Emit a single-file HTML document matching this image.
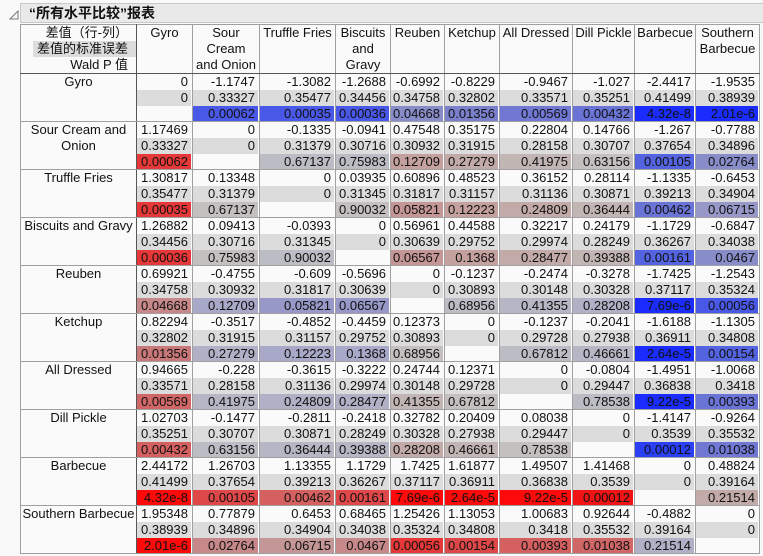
<!DOCTYPE html>
<html><head><meta charset="utf-8"><style>
body{margin:0;background:#f9f9f9;font-family:"Liberation Sans","Noto Sans CJK SC",sans-serif;font-size:13px;color:#111;width:763px;height:556px;overflow:hidden;position:relative}
.title{position:absolute;left:20px;top:3px;width:737px;height:18px;background:#e9e9e9;border:1px solid #c8c8c8;font-weight:bold;font-size:14px;line-height:18px;padding-left:8px;box-sizing:content-box}
.tri{position:absolute;left:9px;top:10px}
table{position:absolute;left:20px;top:24px;border-collapse:collapse;table-layout:fixed;width:739px;background:#fafafa}
td,th{border:1px solid #a0a0a0;padding:0;vertical-align:top;font-weight:normal;line-height:16px;overflow:hidden}
th{text-align:center;height:47px}
th.h{text-align:right;padding-right:0}
th.h div{height:16px;padding-right:8px}
td.l{text-align:center;border-right:1px solid #555}
tr.hd th{border-bottom:1px solid #555}
td div{height:16px;line-height:16px;text-align:right;padding-right:3px;margin-right:1px;white-space:nowrap}
td div:nth-child(3){height:15px}
.g{background:#dcdcdc}
.R0{background:#fe0a0a}.R1{background:#f01414}.R2{background:#e63838}.R3{background:#de4848}.R4{background:#d46060}.R5{background:#d06666}.R6{background:#c87878}.R7{background:#c68888}.R8{background:#c49696}.R9{background:#c4a09e}.Ra{background:#c2aaa8}.Rb{background:#c2b6b4}.Rc{background:#c4c0c0}
.B0{background:#1a2cff}.B1{background:#2b3ff5}.B2{background:#4a58e8}.B3{background:#5464e0}.B4{background:#6a74d6}.B5{background:#7078d4}.B6{background:#7a80cc}.B7{background:#888cc8}.B8{background:#9898c8}.B9{background:#a8a8c8}.Ba{background:#b0b0c6}.Bb{background:#b6b6c4}.Bc{background:#bcbcc4}
</style></head><body>
<svg class="tri" width="10" height="10"><polygon points="1,9 9,1 9,9" fill="none" stroke="#777" stroke-width="1"/></svg>
<div class="title">“所有水平比较”报表</div>
<table>
<colgroup><col style="width:116px"><col style="width:56px"><col style="width:67px"><col style="width:76px"><col style="width:55px"><col style="width:54px"><col style="width:55px"><col style="width:73px"><col style="width:62px"><col style="width:61px"><col style="width:64px"></colgroup>
<tr class="hd"><th class="h" style="border-right:1px solid #555"><div>差值（行-列）</div><div class="g" style="margin-left:12px;padding-right:8px">差值的标准误差</div><div>Wald P 值</div></th><th>Gyro</th><th>Sour<br>Cream<br>and Onion</th><th>Truffle Fries</th><th>Biscuits and Gravy</th><th>Reuben</th><th>Ketchup</th><th>All Dressed</th><th>Dill Pickle</th><th>Barbecue</th><th>Southern Barbecue</th></tr>
<tr><td class="l">Gyro</td>
<td><div>0</div><div class="g">0</div><div></div></td>
<td><div>-1.1747</div><div class="g">0.33327</div><div class="B2">0.00062</div></td>
<td><div>-1.3082</div><div class="g">0.35477</div><div class="B2">0.00035</div></td>
<td><div>-1.2688</div><div class="g">0.34456</div><div class="B2">0.00036</div></td>
<td><div>-0.6992</div><div class="g">0.34758</div><div class="B7">0.04668</div></td>
<td><div>-0.8229</div><div class="g">0.32802</div><div class="B6">0.01356</div></td>
<td><div>-0.9467</div><div class="g">0.33571</div><div class="B5">0.00569</div></td>
<td><div>-1.027</div><div class="g">0.35251</div><div class="B4">0.00432</div></td>
<td><div>-2.4417</div><div class="g">0.41499</div><div class="B0">4.32e-8</div></td>
<td><div>-1.9535</div><div class="g">0.38939</div><div class="B0">2.01e-6</div></td></tr>
<tr><td class="l">Sour Cream and Onion</td>
<td><div>1.17469</div><div class="g">0.33327</div><div class="R2">0.00062</div></td>
<td><div>0</div><div class="g">0</div><div></div></td>
<td><div>-0.1335</div><div class="g">0.31379</div><div class="Bc">0.67137</div></td>
<td><div>-0.0941</div><div class="g">0.30716</div><div class="Bc">0.75983</div></td>
<td><div>0.47548</div><div class="g">0.30932</div><div class="R9">0.12709</div></td>
<td><div>0.35175</div><div class="g">0.31915</div><div class="Ra">0.27279</div></td>
<td><div>0.22804</div><div class="g">0.28158</div><div class="Rb">0.41975</div></td>
<td><div>0.14766</div><div class="g">0.30707</div><div class="Rc">0.63156</div></td>
<td><div>-1.267</div><div class="g">0.37654</div><div class="B3">0.00105</div></td>
<td><div>-0.7788</div><div class="g">0.34896</div><div class="B7">0.02764</div></td></tr>
<tr><td class="l">Truffle Fries</td>
<td><div>1.30817</div><div class="g">0.35477</div><div class="R2">0.00035</div></td>
<td><div>0.13348</div><div class="g">0.31379</div><div class="Rc">0.67137</div></td>
<td><div>0</div><div class="g">0</div><div></div></td>
<td><div>0.03935</div><div class="g">0.31345</div><div class="Rc">0.90032</div></td>
<td><div>0.60896</div><div class="g">0.31817</div><div class="R8">0.05821</div></td>
<td><div>0.48523</div><div class="g">0.31157</div><div class="R9">0.12223</div></td>
<td><div>0.36152</div><div class="g">0.31136</div><div class="Ra">0.24809</div></td>
<td><div>0.28114</div><div class="g">0.30871</div><div class="Rb">0.36444</div></td>
<td><div>-1.1335</div><div class="g">0.39213</div><div class="B4">0.00462</div></td>
<td><div>-0.6453</div><div class="g">0.34904</div><div class="B8">0.06715</div></td></tr>
<tr><td class="l">Biscuits and Gravy</td>
<td><div>1.26882</div><div class="g">0.34456</div><div class="R2">0.00036</div></td>
<td><div>0.09413</div><div class="g">0.30716</div><div class="Rc">0.75983</div></td>
<td><div>-0.0393</div><div class="g">0.31345</div><div class="Bc">0.90032</div></td>
<td><div>0</div><div class="g">0</div><div></div></td>
<td><div>0.56961</div><div class="g">0.30639</div><div class="R8">0.06567</div></td>
<td><div>0.44588</div><div class="g">0.29752</div><div class="R9">0.1368</div></td>
<td><div>0.32217</div><div class="g">0.29974</div><div class="Ra">0.28477</div></td>
<td><div>0.24179</div><div class="g">0.28249</div><div class="Rb">0.39388</div></td>
<td><div>-1.1729</div><div class="g">0.36267</div><div class="B3">0.00161</div></td>
<td><div>-0.6847</div><div class="g">0.34038</div><div class="B7">0.0467</div></td></tr>
<tr><td class="l">Reuben</td>
<td><div>0.69921</div><div class="g">0.34758</div><div class="R7">0.04668</div></td>
<td><div>-0.4755</div><div class="g">0.30932</div><div class="B9">0.12709</div></td>
<td><div>-0.609</div><div class="g">0.31817</div><div class="B8">0.05821</div></td>
<td><div>-0.5696</div><div class="g">0.30639</div><div class="B8">0.06567</div></td>
<td><div>0</div><div class="g">0</div><div></div></td>
<td><div>-0.1237</div><div class="g">0.30893</div><div class="Bc">0.68956</div></td>
<td><div>-0.2474</div><div class="g">0.30148</div><div class="Bb">0.41355</div></td>
<td><div>-0.3278</div><div class="g">0.30328</div><div class="Ba">0.28208</div></td>
<td><div>-1.7425</div><div class="g">0.37117</div><div class="B0">7.69e-6</div></td>
<td><div>-1.2543</div><div class="g">0.35324</div><div class="B2">0.00056</div></td></tr>
<tr><td class="l">Ketchup</td>
<td><div>0.82294</div><div class="g">0.32802</div><div class="R6">0.01356</div></td>
<td><div>-0.3517</div><div class="g">0.31915</div><div class="Ba">0.27279</div></td>
<td><div>-0.4852</div><div class="g">0.31157</div><div class="B9">0.12223</div></td>
<td><div>-0.4459</div><div class="g">0.29752</div><div class="B9">0.1368</div></td>
<td><div>0.12373</div><div class="g">0.30893</div><div class="Rc">0.68956</div></td>
<td><div>0</div><div class="g">0</div><div></div></td>
<td><div>-0.1237</div><div class="g">0.29728</div><div class="Bc">0.67812</div></td>
<td><div>-0.2041</div><div class="g">0.27938</div><div class="Bb">0.46661</div></td>
<td><div>-1.6188</div><div class="g">0.36911</div><div class="B0">2.64e-5</div></td>
<td><div>-1.1305</div><div class="g">0.34808</div><div class="B3">0.00154</div></td></tr>
<tr><td class="l">All Dressed</td>
<td><div>0.94665</div><div class="g">0.33571</div><div class="R5">0.00569</div></td>
<td><div>-0.228</div><div class="g">0.28158</div><div class="Bb">0.41975</div></td>
<td><div>-0.3615</div><div class="g">0.31136</div><div class="Ba">0.24809</div></td>
<td><div>-0.3222</div><div class="g">0.29974</div><div class="Ba">0.28477</div></td>
<td><div>0.24744</div><div class="g">0.30148</div><div class="Rb">0.41355</div></td>
<td><div>0.12371</div><div class="g">0.29728</div><div class="Rc">0.67812</div></td>
<td><div>0</div><div class="g">0</div><div></div></td>
<td><div>-0.0804</div><div class="g">0.29447</div><div class="Bc">0.78538</div></td>
<td><div>-1.4951</div><div class="g">0.36838</div><div class="B0">9.22e-5</div></td>
<td><div>-1.0068</div><div class="g">0.3418</div><div class="B4">0.00393</div></td></tr>
<tr><td class="l">Dill Pickle</td>
<td><div>1.02703</div><div class="g">0.35251</div><div class="R4">0.00432</div></td>
<td><div>-0.1477</div><div class="g">0.30707</div><div class="Bc">0.63156</div></td>
<td><div>-0.2811</div><div class="g">0.30871</div><div class="Bb">0.36444</div></td>
<td><div>-0.2418</div><div class="g">0.28249</div><div class="Bb">0.39388</div></td>
<td><div>0.32782</div><div class="g">0.30328</div><div class="Ra">0.28208</div></td>
<td><div>0.20409</div><div class="g">0.27938</div><div class="Rb">0.46661</div></td>
<td><div>0.08038</div><div class="g">0.29447</div><div class="Rc">0.78538</div></td>
<td><div>0</div><div class="g">0</div><div></div></td>
<td><div>-1.4147</div><div class="g">0.3539</div><div class="B1">0.00012</div></td>
<td><div>-0.9264</div><div class="g">0.35532</div><div class="B5">0.01038</div></td></tr>
<tr><td class="l">Barbecue</td>
<td><div>2.44172</div><div class="g">0.41499</div><div class="R0">4.32e-8</div></td>
<td><div>1.26703</div><div class="g">0.37654</div><div class="R3">0.00105</div></td>
<td><div>1.13355</div><div class="g">0.39213</div><div class="R4">0.00462</div></td>
<td><div>1.1729</div><div class="g">0.36267</div><div class="R3">0.00161</div></td>
<td><div>1.7425</div><div class="g">0.37117</div><div class="R0">7.69e-6</div></td>
<td><div>1.61877</div><div class="g">0.36911</div><div class="R0">2.64e-5</div></td>
<td><div>1.49507</div><div class="g">0.36838</div><div class="R0">9.22e-5</div></td>
<td><div>1.41468</div><div class="g">0.3539</div><div class="R1">0.00012</div></td>
<td><div>0</div><div class="g">0</div><div></div></td>
<td><div>0.48824</div><div class="g">0.39164</div><div class="Ra">0.21514</div></td></tr>
<tr><td class="l">Southern Barbecue</td>
<td><div>1.95348</div><div class="g">0.38939</div><div class="R0">2.01e-6</div></td>
<td><div>0.77879</div><div class="g">0.34896</div><div class="R7">0.02764</div></td>
<td><div>0.6453</div><div class="g">0.34904</div><div class="R8">0.06715</div></td>
<td><div>0.68465</div><div class="g">0.34038</div><div class="R7">0.0467</div></td>
<td><div>1.25426</div><div class="g">0.35324</div><div class="R2">0.00056</div></td>
<td><div>1.13053</div><div class="g">0.34808</div><div class="R3">0.00154</div></td>
<td><div>1.00683</div><div class="g">0.3418</div><div class="R4">0.00393</div></td>
<td><div>0.92644</div><div class="g">0.35532</div><div class="R5">0.01038</div></td>
<td><div>-0.4882</div><div class="g">0.39164</div><div class="Ba">0.21514</div></td>
<td><div>0</div><div class="g">0</div><div></div></td></tr>
</table>
</body></html>
